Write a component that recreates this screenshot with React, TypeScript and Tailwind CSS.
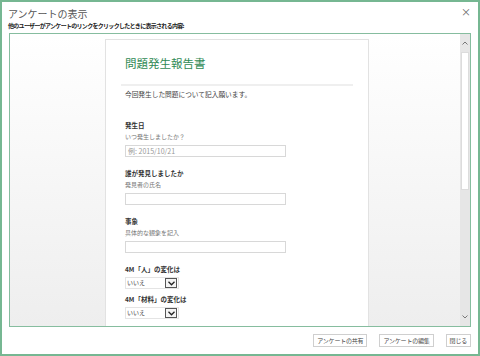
const jp = { fontFamily: '"Noto Sans CJK JP", "Noto Sans", sans-serif' };

function Field({ label, hint, placeholder }: { label: string; hint: string; placeholder?: string }) {
  return (
    <div className="mb-[11px]">
      <div className="text-[6.5px] font-bold text-[#333] leading-[10px]">{label}</div>
      <div className="mt-[2px] text-[6px] text-[#777] leading-[10px]">{hint}</div>
      <div className="mt-[3px] h-[12px] w-[161px] border border-[#d8d8d8] bg-white px-[2px] text-[7px] leading-[10px] text-[#999]">
        {placeholder}
      </div>
    </div>
  );
}

function Choice({ label }: { label: string }) {
  return (
    <div className="mb-[5px]">
      <div className="text-[6.5px] font-bold text-[#333] leading-[10px]">{label}</div>
      <div className="mt-[3px] flex h-[12px] w-[54px] items-center border border-[#e4e4e4] bg-white">
        <span className="flex-1 pl-[1px] text-[6px] leading-[10px] text-[#444]">いいえ</span>
        <span className="mr-[1px] flex h-[10px] w-[12px] items-center justify-center border border-[#555] bg-[#f4f4f4]">
          <svg width="7" height="5" viewBox="0 0 7 5">
            <path d="M0.5 0.8 L3.5 3.8 L6.5 0.8" fill="none" stroke="#222" strokeWidth="1.3" />
          </svg>
        </span>
      </div>
    </div>
  );
}

export default function App() {
  return (
    <div style={jp} className="flex h-[356px] w-[480px] flex-col border-2 border-[#76b792] bg-white">
      <div className="relative h-[31px] shrink-0 px-[6px] pt-[5px]">
        <div className="text-[10px] leading-[13px] text-[#555]">アンケートの表示</div>
        <div className="mt-[1px] text-[6px] font-bold leading-[10px] tracking-[-0.7px] text-[#222]">
          他のユーザーがアンケートのリンクをクリックしたときに表示される内容:
        </div>
        <span className="absolute right-[7px] top-[2px] text-[10px] text-[#666]">×</span>
      </div>
      <div className="mx-[7px] flex h-[294px] shrink-0 border border-[#86bd9f]">
        <div className="flex-1 overflow-hidden bg-gradient-to-b from-white to-[#eeeeee] pl-[95px] pt-[5px]">
          <div className="h-[300px] w-[264px] border border-[#e2e2e2] bg-white px-[19px]">
            <div className="pt-[15px] text-[11.5px] leading-[16px] text-[#2f8a55]">問題発生報告書</div>
            <div className="-mx-[4px] mt-[13px] h-[2px] bg-[#efefef]" />
            <div className="mt-[3px] text-[6.7px] leading-[11px] text-[#444]">今回発生した問題について記入願います。</div>
            <div className="mt-[20px]">
              <Field label="発生日" hint="いつ発生しましたか？" placeholder="例: 2015/10/21" />
              <Field label="誰が発見しましたか" hint="発見者の氏名" />
              <Field label="事象" hint="具体的な観象を記入" />
              <Choice label="4M「人」の変化は" />
              <Choice label="4M「材料」の変化は" />
            </div>
          </div>
        </div>
        <div className="flex w-[10px] flex-col bg-[#e6e6e6]">
          <div className="flex h-[18px] items-center justify-center">
            <svg width="6" height="4" viewBox="0 0 6 4">
              <path d="M0.5 3.5 L3 1 L5.5 3.5" fill="none" stroke="#777" strokeWidth="1" />
            </svg>
          </div>
          <div className="mx-[1px] h-[138px] border border-[#dcdcdc] bg-white" />
          <div className="flex-1" />
          <div className="flex h-[18px] items-center justify-center">
            <svg width="6" height="4" viewBox="0 0 6 4">
              <path d="M0.5 0.5 L3 3 L5.5 0.5" fill="none" stroke="#777" strokeWidth="1" />
            </svg>
          </div>
        </div>
      </div>
      <div className="flex flex-1 items-center justify-end gap-[12px] pr-[7px]">
        <span className="border border-[#cfcfcf] px-[3px] text-[6px] leading-[11px] tracking-[-0.2px] text-[#444]">アンケートの共有</span>
        <span className="border border-[#cfcfcf] px-[3px] text-[6px] leading-[11px] tracking-[-0.2px] text-[#444]">アンケートの編集</span>
        <span className="border border-[#cfcfcf] px-[3px] text-[6px] leading-[11px] tracking-[-0.2px] text-[#444]">閉じる</span>
      </div>
    </div>
  );
}
